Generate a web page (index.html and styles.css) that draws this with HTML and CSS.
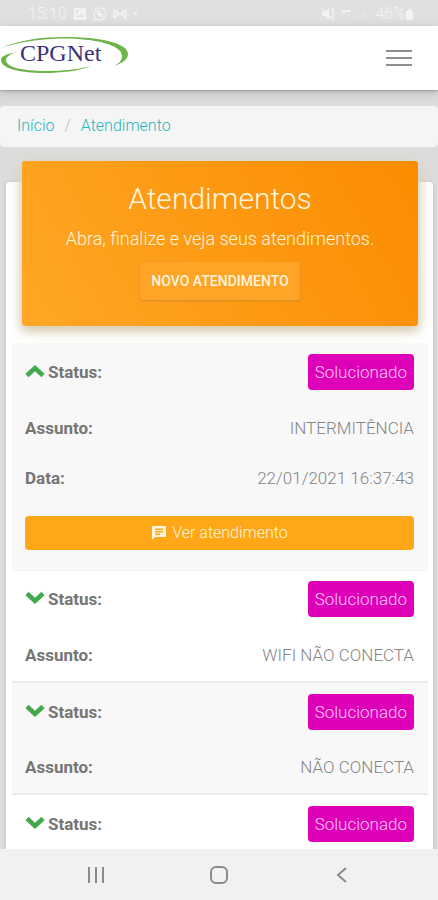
FILE: index.html
```html
<!DOCTYPE html>
<html lang="pt-BR">
<head>
<meta charset="utf-8">
<meta name="viewport" content="width=device-width, initial-scale=1">
<title>Atendimentos - CPGNet</title>
<link rel="stylesheet" href="styles.css">
</head>
<body>
<svg class="sprite" aria-hidden="true">
  <symbol id="chevron" viewBox="0 0 20 14"><path d="M2 2.500 10 10 18 2.500" fill="none" stroke="currentColor" stroke-width="4.500"/></symbol>
</svg>

<div class="statusbar">
  <span>15:10</span>
  <svg width="14" height="14" viewBox="0 0 14 14" aria-hidden="true"><path fill="currentColor" fill-rule="evenodd" d="M1 1h12v12H1zM3 10h8L8.500 6.500 6.500 9 5 7.500zM3 3v3h2V3z"/></svg>
  <svg width="14" height="14" viewBox="0 0 14 14" aria-hidden="true"><path fill="none" stroke="currentColor" stroke-width="1.200" d="M1 13l1-3a6 6 0 1 1 2 2zM4.500 4.500c0 3 2 5 5 5l.5-1.500-1.500-.8-1 .8-1.500-1.500.8-1-.8-1.500z"/></svg>
  <svg width="14" height="14" viewBox="0 0 14 14" aria-hidden="true"><path fill="none" stroke="currentColor" stroke-width="1.500" d="M1 11V4l4 3h4l4-3v7L9 7M5 7l-4 4M2 3l3 2M12 3L9 5"/></svg>
  <span>•</span>
  <svg class="status-end" width="14" height="14" viewBox="0 0 14 14" aria-hidden="true"><path fill="currentColor" d="M1 5h3l4-4v12L4 9H1z"/><path fill="none" stroke="currentColor" stroke-width="1.300" d="M1 1l11 12M10 2h2v9"/></svg>
  <svg class="signal" width="28" height="14" viewBox="0 0 28 14" aria-hidden="true"><path fill="currentColor" d="M1 3h3v3H1zM5 3h4v2H5z"/><path fill="currentColor" opacity=".4" d="M14 10h2v2h-2zM18 8h2v4h-2zM22 6h2v6h-2z"/></svg>
  <span class="battery">46%<svg width="9" height="13" viewBox="0 0 9 13" aria-hidden="true"><path fill="currentColor" d="M3 1h3v2h2v9H1V3h2z"/></svg></span>
</div>

<header class="topbar">
  <a href="#" class="logo" aria-label="CPGNet">
    <svg width="130" height="38" viewBox="0 0 130 38">
      <path fill="#6db548" d="M0 12C20 4 42 1 65 1c35 0 63 6 63 17 0 5-5 9-14 12 6-3 8-6 8-10C122 9 96 2.500 63 2.500 42 2.500 20 6 0 12z"/>
      <path fill="#6db548" d="M17 16C7 18 1 20 1 24c0 8 17 13 43 13 18 0 34-2 47-7-15 4-30 5-45 5-24 0-40-4-40-11 0-3 4-6 11-8z"/>
      <text x="20" y="25" class="logo-text">CPGNet</text>
    </svg>
  </a>
  <button type="button" class="menu" aria-label="Menu"><i></i><i></i><i></i></button>
</header>

<main class="content">
  <nav class="breadcrumb" aria-label="Navegação">
    <a href="#">Início</a><span>/</span><a href="#">Atendimento</a>
  </nav>

  <section class="card">
    <div class="hero">
      <h1>Atendimentos</h1>
      <p>Abra, finalize e veja seus atendimentos.</p>
      <button type="button" class="new">NOVO ATENDIMENTO</button>
    </div>

    <table class="tickets">
      <tbody>
        <tr class="status"><th scope="row"><button type="button" class="toggle open" aria-label="Recolher"><svg width="20" height="14"><use href="#chevron"/></svg></button>Status:</th><td><span class="badge">Solucionado</span></td></tr>
        <tr class="subject"><th scope="row">Assunto:</th><td>INTERMITÊNCIA</td></tr>
        <tr class="date"><th scope="row">Data:</th><td>22/01/2021 16:37:43</td></tr>
        <tr class="action"><td colspan="2"><button type="button" class="view"><svg width="16" height="16" viewBox="0 0 16 16" aria-hidden="true"><path fill="currentColor" fill-rule="evenodd" d="M1 1h14v11H4l-3 3zM4 3.500V5h8V3.500zM4 6v1.500h8V6zM4 8.500V10h5V8.500z"/></svg>Ver atendimento</button></td></tr>
      </tbody>
      <tbody>
        <tr class="status"><th scope="row"><button type="button" class="toggle" aria-label="Expandir"><svg width="20" height="14"><use href="#chevron"/></svg></button>Status:</th><td><span class="badge">Solucionado</span></td></tr>
        <tr class="subject"><th scope="row">Assunto:</th><td>WIFI NÃO CONECTA</td></tr>
      </tbody>
      <tbody>
        <tr class="status"><th scope="row"><button type="button" class="toggle" aria-label="Expandir"><svg width="20" height="14"><use href="#chevron"/></svg></button>Status:</th><td><span class="badge">Solucionado</span></td></tr>
        <tr class="subject"><th scope="row">Assunto:</th><td>NÃO CONECTA</td></tr>
      </tbody>
      <tbody>
        <tr class="status"><th scope="row"><button type="button" class="toggle" aria-label="Expandir"><svg width="20" height="14"><use href="#chevron"/></svg></button>Status:</th><td><span class="badge">Solucionado</span></td></tr>
      </tbody>
    </table>
  </section>
</main>

<nav class="softkeys" aria-label="Sistema">
  <button type="button" aria-label="Recentes"><svg width="20" height="20" viewBox="0 0 20 20"><path d="M3 2v16M10 2v16M17 2v16"/></svg></button>
  <button type="button" aria-label="Início"><svg width="20" height="20" viewBox="0 0 20 20"><rect x="2" y="2" width="16" height="16" rx="5"/></svg></button>
  <button type="button" aria-label="Voltar"><svg width="20" height="20" viewBox="0 0 20 20"><path d="M14 3 6 10l8 7"/></svg></button>
</nav>
</body>
</html>
```
FILE: styles.css
```css
* { box-sizing: border-box; }

body {
  margin: 0;
  height: 100vh;
  display: flex;
  flex-direction: column;
  overflow: hidden;
  background: #dcdcdc;
  color: #757575;
  font: 300 17px/24px Roboto, sans-serif;
}

button {
  border: 0;
  padding: 0;
  background: none;
  color: inherit;
  font: inherit;
}

svg { display: block; }
.sprite { position: absolute; width: 0; height: 0; }

.statusbar {
  flex: none;
  height: 26px;
  padding: 2px 24px 0 28px;
  display: flex;
  align-items: center;
  gap: 6px;
  background: #e0e0e0;
  color: #f3f3f3;
  font-size: 16px;
}
.status-end { margin-left: auto; }
.battery { display: flex; align-items: center; }

.topbar {
  position: relative;
  z-index: 1;
  flex: none;
  height: 64px;
  padding: 0 26px 6px 0;
  display: flex;
  align-items: center;
  justify-content: space-between;
  background: #fff;
  box-shadow: 0 1px 2px #999, 0 3px 10px #bbb;
}
.logo-text { font: 400 24px "Liberation Serif", serif; fill: #3b327c; }
.menu { display: grid; gap: 5px; padding-top: 6px; }
.menu i { width: 26px; height: 2px; background: #8e8e8e; }

.content { flex: 1; min-height: 0; overflow: hidden; }

.breadcrumb {
  display: flex;
  gap: 10px;
  margin-top: 16px;
  padding: 8px 17px 9px;
  border-radius: 4px;
  background: #f5f5f5;
  color: #bbb;
  font-size: 16px;
}
.breadcrumb a { color: #1fb6c3; text-decoration: none; }

.card {
  margin: 35px 5px 0 6px;
  padding: 0 5px 0 6px;
  border-radius: 4px;
  background: #fff;
  box-shadow: 0 1px 4px #bbb;
}

.hero {
  position: relative;
  top: -21px;
  margin: 0 10px -4px 10px;
  padding: 20px 16px 26px;
  border-radius: 3px;
  background: linear-gradient(60deg, #ffa726, #fb8c00);
  box-shadow: 0 4px 14px #d8cba8, 0 4px 8px #ddd;
  color: #fff4dc;
  text-align: center;
}
.hero h1 { margin: 0; font-size: 30px; line-height: 36px; font-weight: 300; }
.hero p { margin: 10px 0 11px; font-size: 18px; }
.new {
  height: 38px;
  padding: 0 11px;
  border-radius: 3px;
  background: #ffa426;
  box-shadow: 0 1px 2px #d18b2f;
  font-size: 14px;
  font-weight: 500;
}

.tickets { width: 100%; border-collapse: collapse; }
.tickets tbody:nth-child(odd) { background: #f8f8f8; }
.tickets tbody + tbody { border-top: 2px solid #ececec; }
.tickets tbody:nth-child(2) { border-top: 1px solid #f3f3f3; }
.tickets th, .tickets td { padding: 0 14px 0 13px; }
.tickets th { text-align: left; font-weight: 700; }
.tickets td { text-align: right; color: #858585; }
.status { height: 58px; }
.subject { height: 54px; }
.date { height: 46px; }
.tickets .action td { height: 69px; padding-bottom: 4px; }

.toggle {
  display: inline-block;
  margin-right: 3px;
  color: #43a84c;
}
.toggle.open { transform: rotate(180deg); }

.badge {
  display: inline-block;
  padding: 6px 7px;
  border-radius: 4px;
  background: #dd00b8;
  color: #ffc8f4;
}

.view {
  width: 100%;
  height: 34px;
  display: flex;
  align-items: center;
  justify-content: center;
  gap: 5px;
  border-radius: 4px;
  background: #ffa716;
  color: #fff4dc;
  font-size: 16px;
}

.softkeys {
  position: relative;
  flex: none;
  height: 51px;
  padding: 0 35px;
  display: flex;
  align-items: center;
  background: #f1f1f1;
}
.softkeys button { flex: 1; display: grid; place-items: center; }
.softkeys svg { fill: none; stroke: #8b8b8b; stroke-width: 2; }
```
